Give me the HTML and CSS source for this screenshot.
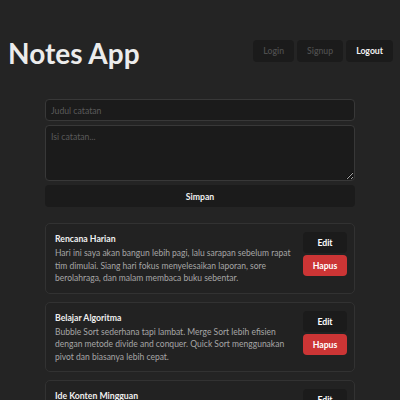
FILE: index.html
```html
<!DOCTYPE html>
<html lang="id">
<head>
<meta charset="utf-8">
<title>Notes App</title>
<link rel="stylesheet" href="styles.css">
</head>
<body>
<header class="topbar">
  <h1 class="brand">Notes App</h1>
  <nav class="nav">
    <button class="nav-btn disabled">Login</button>
    <button class="nav-btn disabled">Signup</button>
    <button class="nav-btn">Logout</button>
  </nav>
</header>
<main class="container">
  <form class="note-form">
    <input class="field" type="text" placeholder="Judul catatan">
    <textarea class="field area" placeholder="Isi catatan..."></textarea>
    <button type="button" class="save-btn">Simpan</button>
  </form>
  <section class="notes">
    <article class="card">
      <div class="card-body">
        <h3 class="card-title">Rencana Harian</h3>
        <p class="card-text">Hari ini saya akan bangun lebih pagi, lalu sarapan sebelum rapat tim dimulai. Siang hari fokus menyelesaikan laporan, sore berolahraga, dan malam membaca buku sebentar.</p>
      </div>
      <div class="card-actions">
        <button class="btn-edit">Edit</button>
        <button class="btn-del">Hapus</button>
      </div>
    </article>
    <article class="card">
      <div class="card-body">
        <h3 class="card-title">Belajar Algoritma</h3>
        <p class="card-text">Bubble Sort sederhana tapi lambat. Merge Sort lebih efisien dengan metode divide and conquer. Quick Sort menggunakan pivot dan biasanya lebih cepat.</p>
      </div>
      <div class="card-actions">
        <button class="btn-edit">Edit</button>
        <button class="btn-del">Hapus</button>
      </div>
    </article>
    <article class="card">
      <div class="card-body">
        <h3 class="card-title">Ide Konten Mingguan</h3>
        <p class="card-text">Senin tips produktivitas, Rabu ulasan buku, Jumat tutorial singkat pemrograman untuk pemula.</p>
      </div>
      <div class="card-actions">
        <button class="btn-edit">Edit</button>
        <button class="btn-del">Hapus</button>
      </div>
    </article>
  </section>
</main>
</body>
</html>
```
FILE: styles.css
```css
* { box-sizing: border-box; }
html, body { margin: 0; padding: 0; }
body {
  background: #242424;
  color: #e6e6e6;
  font-family: Lato, "Open Sans", sans-serif;
  font-size: 8.7px;
  overflow: hidden;
  height: 400px;
}
.topbar {
  display: flex;
  justify-content: space-between;
  align-items: center;
  padding: 29px 7px 0 8px;
  height: 72px;
}
.brand {
  margin: 0;
  font-size: 28px;
  font-weight: 700;
  color: #ececec;
  line-height: 42px;
  padding-top: 4px;
}
.nav { display: flex; gap: 3px; }
.nav-btn {
  font-family: inherit;
  font-size: 8.7px;
  font-weight: 700;
  height: 22px;
  padding: 0 10px;
  background: #1b1b1b;
  color: #f2f2f2;
  border: none;
  border-radius: 4px;
}
.nav-btn.disabled { color: #4e4e4e; font-weight: 600; }
.container {
  width: 310px;
  margin: 27px auto 0;
}
.note-form { display: flex; flex-direction: column; gap: 4px; }
.field {
  font-family: inherit;
  font-size: 8.7px;
  height: 22px;
  padding: 0 5px;
  background: #1b1b1b;
  color: #ddd;
  border: 1px solid #383838;
  border-radius: 4px;
  outline: none;
}
.field::placeholder { color: #5a5a5a; }
.area { height: 56px; padding: 5px; resize: vertical; }
.save-btn {
  font-family: inherit;
  font-size: 8.7px;
  font-weight: 700;
  height: 22px;
  background: #1b1b1b;
  color: #f0f0f0;
  border: none;
  border-radius: 4px;
}
.notes { margin-top: 16px; display: flex; flex-direction: column; gap: 8px; }
.card {
  display: flex;
  gap: 6px;
  min-height: 70px;
  padding: 8px 7px 8px 9px;
  border: 1px solid #323232;
  border-radius: 5px;
  background: #222;
}
.card-body { flex: 1; }
.card-title {
  margin: 1px 0 3px;
  font-size: 8.7px;
  font-weight: 700;
  color: #f0f0f0;
}
.card-text {
  margin: 0;
  font-size: 8.5px;
  color: #a6a6a6;
  line-height: 12.5px;
}
.card-actions { display: flex; flex-direction: column; gap: 2px; }
.btn-edit, .btn-del {
  font-family: inherit;
  font-size: 8.7px;
  font-weight: 700;
  width: 44px;
  height: 21px;
  border: none;
  border-radius: 4px;
  color: #fff;
}
.btn-edit { background: #1b1b1b; }
.btn-del { background: #cc3535; }
```
